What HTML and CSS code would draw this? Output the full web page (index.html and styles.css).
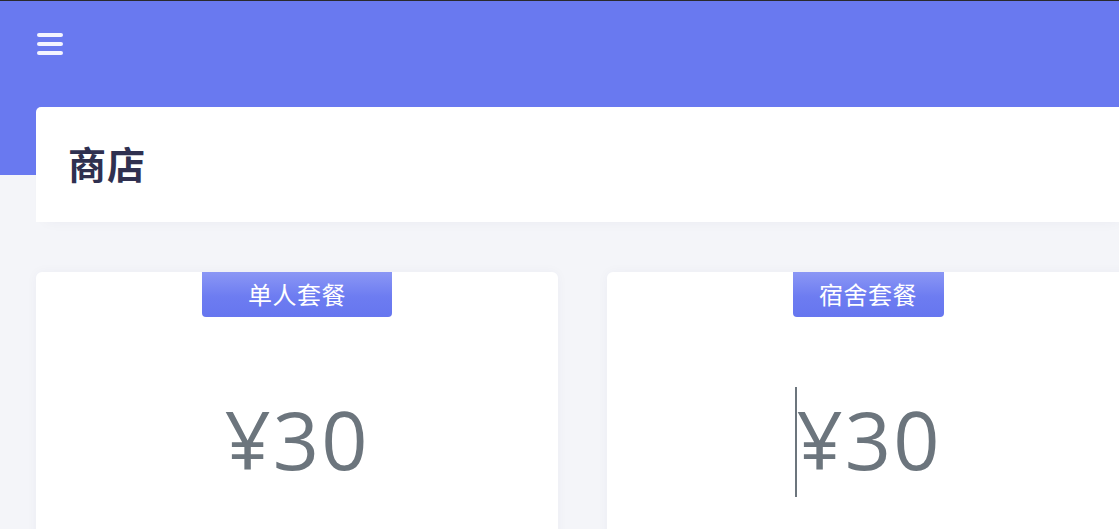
FILE: index.html
```html
<!DOCTYPE html>
<html lang="zh">
<head>
<meta charset="utf-8">
<title>商店</title>
<link rel="stylesheet" href="styles.css">
</head>
<body>
<div class="topbar">
  <button class="menu" aria-label="menu">
    <span class="bar"></span><span class="bar"></span><span class="bar"></span>
  </button>
</div>
<main class="container">
  <section class="page-head">
    <h1 class="page-title">商店</h1>
  </section>
  <section class="plans">
    <article class="plan">
      <div class="badge badge-wide">单人套餐</div>
      <div class="price"><span class="amount">¥30</span></div>
    </article>
    <article class="plan">
      <div class="badge badge-narrow">宿舍套餐</div>
      <div class="price"><span class="caret"></span><span class="amount">¥30</span></div>
    </article>
  </section>
</main>
</body>
</html>
```

FILE: styles.css
```css
html, body {
  margin: 0;
  padding: 0;
  overflow: hidden;
}
body {
  background: #f4f5f9;
  border-top: 1px solid #2a2a2e;
  font-family: "Noto Sans", "Noto Sans CJK SC", sans-serif;
  height: 528px;
  position: relative;
}
.topbar {
  background: #6979f0;
  height: 174px;
  padding: 32px 0 0 37px;
  box-sizing: border-box;
}
.menu {
  display: flex;
  flex-direction: column;
  gap: 5px;
  padding: 0;
  margin: 0;
  border: 0;
  background: none;
  width: 26px;
}
.bar {
  display: block;
  height: 4px;
  width: 26px;
  border-radius: 2px;
  background: #f3f4ff;
}
.container {
  width: 1093px;
  margin: -68px 0 0 36px;
  display: flex;
  flex-direction: column;
  gap: 50px;
}
.page-head {
  background: #fff;
  border-radius: 5px 0 0 0;
  height: 115px;
  box-sizing: border-box;
  padding: 0 32px;
  display: flex;
  align-items: center;
  box-shadow: 0 8px 14px -10px rgba(30, 40, 90, 0.06);
}
.page-title {
  margin: 0;
  margin-bottom: 4px;
  font-family: "Noto Sans CJK SC", sans-serif;
  font-size: 38px;
  font-weight: 700;
  color: #2f3050;
  letter-spacing: 1px;
}
.plans {
  display: flex;
  gap: 49px;
}
.plan {
  width: 522px;
  height: 320px;
  background: #fff;
  border-radius: 6px;
  display: flex;
  flex-direction: column;
  align-items: center;
  box-shadow: 0 0 12px rgba(40, 50, 110, 0.04);
}
.badge {
  height: 45px;
  box-sizing: border-box;
  display: flex;
  align-items: center;
  justify-content: center;
  color: #fff;
  font-family: "Noto Sans CJK SC", sans-serif;
  font-size: 24px;
  letter-spacing: 0.5px;
  background: linear-gradient(180deg, #8b97f5 0%, #6d7cf1 55%, #6676ef 100%);
  border-radius: 0 0 4px 4px;
  padding-bottom: 2px;
}
.badge-wide { width: 190px; }
.badge-narrow { width: 151px; }
.price {
  margin-top: 70px;
  display: flex;
  align-items: center;
  height: 110px;
}
.amount {
  font-family: "Open Sans", sans-serif;
  font-size: 81px;
  font-weight: 500;
  letter-spacing: 2px;
  line-height: 110px;
  color: #6c757d;
  position: relative;
  top: -3px;
}
.caret {
  display: block;
  width: 2px;
  height: 110px;
  background: #6c757d;
}
```
